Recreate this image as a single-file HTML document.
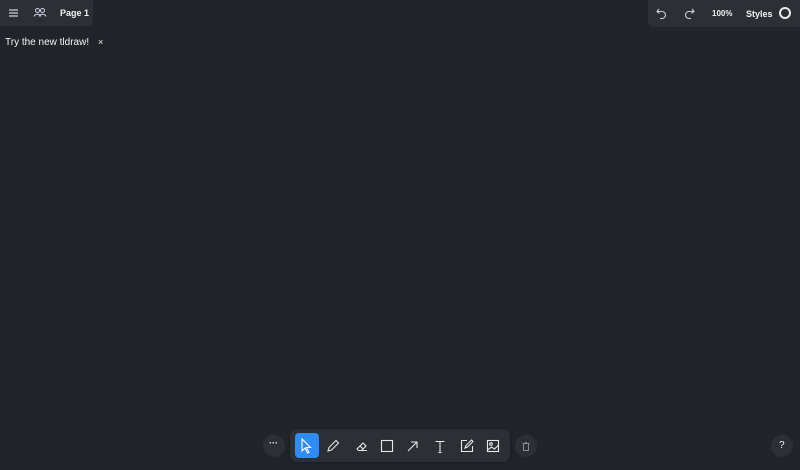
<!DOCTYPE html><html><head><style>
body{margin:0;width:800px;height:470px;background:#212529;font-family:"Liberation Sans",sans-serif;color:#f1f3f5;overflow:hidden;position:relative}
.p{position:absolute;background:#2c3035}
.t{position:absolute;font-size:9px;font-weight:bold;white-space:nowrap}
svg{position:absolute}
.c{position:absolute;border-radius:50%;background:#2c3035}
</style></head><body>
<div class="p" style="left:0;top:0;width:93px;height:26px;border-bottom-right-radius:6px"></div>
<svg style="left:8px;top:8px" width="11" height="10" viewBox="0 0 11 10" stroke="#ccd" stroke-width="1.2"><path d="M1 2H10M1 5H10M1 8H10"/></svg>
<svg style="left:33px;top:7px" width="14" height="11" viewBox="0 0 14 11" fill="none" stroke="#ccd" stroke-width="1.1"><circle cx="4.5" cy="3.5" r="2"/><circle cx="9.5" cy="3.5" r="2"/><path d="M1 9.5c1-3 6-3 7 0M6 9.5c1-3 6-3 7 0"/></svg>
<div class="t" style="left:60px;top:8px">Page 1</div>
<div class="t" style="left:5px;top:37px;font-weight:normal;font-size:10px">Try the new tldraw!</div>
<div class="t" style="left:98px;top:37px;font-size:9px;font-weight:normal">×</div>
<div class="p" style="left:648px;top:0;width:152px;height:27px;border-bottom-left-radius:6px"></div>
<svg style="left:656px;top:8px" width="12" height="12" viewBox="0 0 12 12" fill="none" stroke="#ccd" stroke-width="1.1"><path d="M3 1L1 3.5 3.5 5.5M1.5 3.5H6a3.5 3.5 0 010 7H4"/></svg>
<svg style="left:683px;top:8px" width="12" height="12" viewBox="0 0 12 12" fill="none" stroke="#ccd" stroke-width="1.1"><path d="M9 1L11 3.5 8.5 5.5M10.5 3.5H6a3.5 3.5 0 000 7H8"/></svg>
<div class="t" style="left:712px;top:9px;font-size:8px">100%</div>
<div class="t" style="left:746px;top:9px">Styles</div>
<div style="position:absolute;left:779px;top:7px;width:8px;height:8px;border:2px solid #e8eaec;border-radius:50%"></div>
<div class="c" style="left:263px;top:435px;width:22px;height:22px"></div>
<div class="t" style="left:269px;top:438px;font-size:9px">···</div>
<div class="p" style="left:290px;top:429px;width:220px;height:33px;border-radius:7px;box-shadow:0 0 3px #0006"></div>
<div style="position:absolute;left:295px;top:433px;width:24px;height:25px;border-radius:4px;background:#2f8cf7"></div>
<svg style="left:0;top:0" width="800" height="470" fill="none" stroke="#e6e8ea" stroke-width="1.1">
<path d="M302 439L302 451 305 448 307.5 453 309 452.3 306.5 447.5 310.5 447.5Z" stroke="#fff"/>
<path d="M328 451l1-3.5 7-7 2.5 2.5-7 7z"/>
<path d="M357 449l6-6 3 3-4.5 4.5h-3zM360 446l3 3M359 450.5h8"/>
<rect x="381.5" y="440.5" width="11" height="11"/>
<path d="M408 451l9-9M411 442h6v6"/>
<path d="M435.5 441.5h9M440 441.5v11M438.5 452.5h3"/>
<path d="M467 440.5h-5.5v11h11V446M465 448l1-2.5 5.5-5.5 1.5 1.5-5.5 5.5z"/>
<rect x="487.5" y="440.5" width="11" height="11"/><circle cx="491" cy="444" r="1.3"/><path d="M487.5 450l4-3 3 2 4-4"/>
</svg>
<div class="c" style="left:515px;top:435px;width:22px;height:22px"></div>
<svg style="left:522px;top:442px" width="8" height="9" viewBox="0 0 8 9" fill="none" stroke="#889" stroke-width="1"><path d="M0.5 1.5h7M1.5 1.5v7h5v-7M3 0.5h2"/></svg>
<div class="c" style="left:771px;top:435px;width:22px;height:22px"></div>
<div class="t" style="left:779px;top:440px;font-size:10px;font-weight:normal">?</div>
</body></html>
